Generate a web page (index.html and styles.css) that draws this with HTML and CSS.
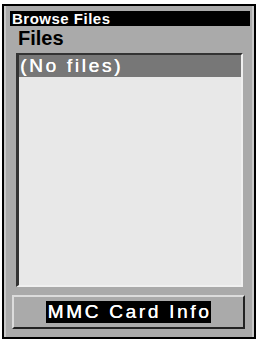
FILE: index.html
```html
<!DOCTYPE html>
<html>
<head>
<meta charset="utf-8">
<link rel="stylesheet" href="styles.css">
</head>
<body>
<div class="device">
  <div class="titlebar">Browse Files</div>
  <div class="heading">Files</div>
  <div class="list">
    <div class="row selected">(No files)</div>
  </div>
  <div class="button"><span class="label">MMC Card Info</span></div>
</div>
</body>
</html>
```
FILE: styles.css
```css
body {
  margin: 0;
  background: #fff;
  font-family: "Liberation Sans", Arial, sans-serif;
}
.device {
  margin: 4px 0 0 2px;
  width: 254px;
  height: 335px;
  box-sizing: border-box;
  border: 2px solid #000;
  background: #aaaaaa;
  padding: 5px 4px 0 6px;
  display: flex;
  flex-direction: column;
  box-shadow: inset 2px 0 #c8c8c8, inset -2px 0 #c8c8c8;
}
.titlebar {
  height: 15px;
  line-height: 15px;
  background: #000;
  color: #fff;
  font-weight: bold;
  font-size: 15px;
  letter-spacing: 0.5px;
  padding-left: 2px;
}
.heading {
  margin-top: 2px;
  height: 20px;
  line-height: 20px;
  font-weight: bold;
  font-size: 20px;
  color: #000;
  padding-left: 8px;
}
.list {
  margin: 5px 7px 0 6px;
  height: 234px;
  box-sizing: border-box;
  background: #e8e8e8;
  border-top: 2px solid #333;
  border-left: 3px solid #333;
  border-right: 2px solid #f0f0f0;
  border-bottom: 2px solid #f0f0f0;
}
.row {
  height: 22px;
  line-height: 22px;
  font-size: 19px;
  letter-spacing: 2.7px;
  padding-left: 1px;
  text-shadow: 0.4px 0 0 currentColor;
}
.row.selected {
  background: #777;
  color: #fff;
}
.button {
  margin: 8px 5px 0 2px;
  height: 34px;
  box-sizing: border-box;
  border-top: 2px solid #dcdcdc;
  border-left: 2px solid #dcdcdc;
  border-right: 2px solid #222;
  border-bottom: 2px solid #222;
  display: flex;
  align-items: center;
  justify-content: center;
}
.label {
  background: #000;
  color: #fff;
  font-size: 19px;
  letter-spacing: 2.7px;
  height: 22px;
  line-height: 22px;
  padding: 0 0 0 2px;
  text-shadow: 0.4px 0 0 currentColor;
}
```
